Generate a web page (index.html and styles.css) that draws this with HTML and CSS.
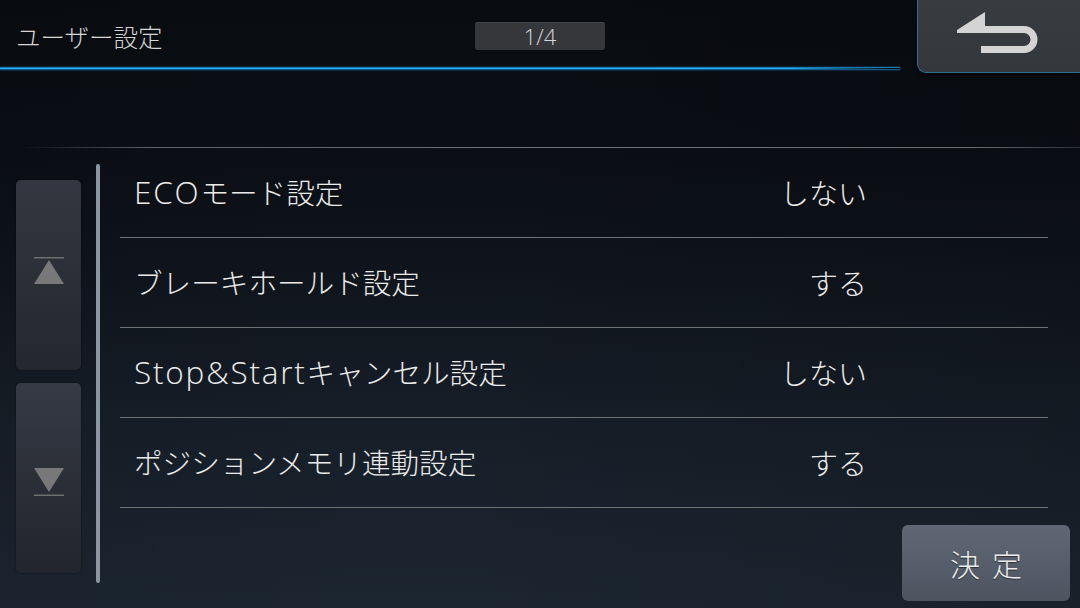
FILE: index.html
```html
<!DOCTYPE html>
<html lang="ja">
<head>
<meta charset="utf-8">
<title>ユーザー設定</title>
<link rel="stylesheet" href="styles.css">
</head>
<body>
<div class="screen">
  <header class="header">
    <div class="header-left">
      <div class="header-row">
        <h1 class="title">ユーザー設定</h1>
        <div class="pager">1/4</div>
      </div>
      <div class="accent"></div>
    </div>
    <button class="back" aria-label="戻る">
      <svg width="100" height="60" viewBox="0 0 100 60">
        <path d="M17 30 L45 12 L45 26 L84 26 A13.5 13.5 0 0 1 84 53 L41 53 L41 46 L84 46 A6.5 6.5 0 0 0 84 33 L17 33 Z" fill="#d4d4d4"/>
      </svg>
    </button>
  </header>

  <div class="divider"></div>

  <main class="main">
    <div class="scroll-col">
      <button class="scroll-btn up" aria-label="上へ">
        <svg width="32" height="28" viewBox="0 0 32 28">
          <rect x="1" y="0" width="30" height="1.5" fill="#6f6f6f"/>
          <polygon points="16,3 31,27 1,27" fill="#787878"/>
        </svg>
      </button>
      <button class="scroll-btn down" aria-label="下へ">
        <svg width="32" height="28" viewBox="0 0 32 28">
          <polygon points="1,0 31,0 16,24" fill="#787878"/>
          <rect x="1" y="26.5" width="30" height="1.5" fill="#6f6f6f"/>
        </svg>
      </button>
    </div>
    <div class="scrollbar"></div>
    <div class="content">
      <ul class="list">
        <li class="row"><span class="label"><span class="latin">ECO</span>モード設定</span><span class="value">しない</span></li>
        <li class="row"><span class="label">ブレーキホールド設定</span><span class="value">する</span></li>
        <li class="row"><span class="label"><span class="latin">Stop&amp;Start</span>キャンセル設定</span><span class="value">しない</span></li>
        <li class="row"><span class="label">ポジションメモリ連動設定</span><span class="value">する</span></li>
      </ul>
      <div class="footer">
        <button class="ok">決定</button>
      </div>
    </div>
  </main>
</div>
</body>
</html>
```

FILE: styles.css
```css
* { box-sizing: border-box; }
html, body { margin: 0; padding: 0; }
body {
  width: 1080px;
  height: 608px;
  overflow: hidden;
  font-family: "Open Sans", "Noto Sans CJK JP", "Noto Sans", sans-serif;
  font-weight: 300;
  color: #e6e6e6;
  background: #0a0d12;
}
.screen {
  width: 1080px;
  height: 608px;
  display: flex;
  flex-direction: column;
  background:
    linear-gradient(90deg, rgba(0,0,0,0.05) 0%, rgba(0,0,0,0) 40%, rgba(0,0,0,0.12) 100%),
    linear-gradient(180deg, #090c10 0%, #0a0d13 22%, #0e131a 40%, #161e28 70%, #1c2631 100%);
}
button { font-family: inherit; font-weight: inherit; border: none; padding: 0; cursor: pointer; }

/* header */
.header {
  display: flex;
  height: 73px;
  flex: none;
}
.header-left {
  flex: 1;
  display: flex;
  flex-direction: column;
}
.header-row {
  height: 67px;
  display: grid;
  grid-template-columns: 475px 130px;
  align-items: start;
}
.title {
  margin: 0;
  padding: 21px 0 0 16px;
  font-size: 24.5px;
  font-weight: 300;
  line-height: 34px;
  color: #d6d6d6;
}
.pager {
  margin-top: 22px;
  height: 28px;
  border-radius: 3px;
  background: #35373b;
  border-top: 1px solid #44464a;
  color: #d6d6d6;
  font-size: 22px;
  line-height: 26px;
  text-align: center;
}
.accent {
  height: 3px;
  width: 900px;
  background: linear-gradient(90deg, #1fb2ec 0%, #1fb2ec 88%, rgba(31,178,236,0) 99%);
  box-shadow: 0 0 2px rgba(31,140,220,0.7);
  border-top: 1px solid #1779b5;
  border-bottom: 1px solid #14588a;
}
.back {
  width: 163px;
  height: 73px;
  flex: none;
  background: linear-gradient(180deg, #383b40 0%, #34373c 100%);
  border-left: 1px solid #2c6f90;
  border-bottom: 1px solid #2c6f90;
  border-radius: 0 0 0 9px;
  display: flex;
  align-items: flex-start;
  justify-content: flex-start;
  padding: 0 0 0 22px;
  box-shadow: 0 2px 4px rgba(0,0,0,0.6);
}
.back svg { display: block; }

.divider {
  margin-top: 74px;
  height: 1px;
  flex: none;
  background: linear-gradient(90deg, rgba(110,110,110,0) 2%, #5e6062 14%, #6e7072 50%, #6a6c6e 90%, rgba(100,100,100,0.4) 100%);
}

/* main */
.main {
  flex: 1;
  display: flex;
  padding-left: 16px;
}
.scroll-col {
  width: 65px;
  display: flex;
  flex-direction: column;
  gap: 13px;
  padding-top: 32px;
}
.scroll-btn {
  height: 190px;
  border-radius: 5px;
  display: flex;
  align-items: center;
  justify-content: center;
  box-shadow: 0 0 2px rgba(0,0,0,0.6);
}
.scroll-btn.up {
  background: linear-gradient(180deg, #343741 0%, #2c2f37 50%, #24272e 100%);
  padding-bottom: 8px;
}
.scroll-btn.down {
  background: linear-gradient(180deg, #363a45 0%, #2c2f38 50%, #22252c 100%);
  padding-top: 8px;
}
.scroll-btn svg { display: block; }
.scrollbar {
  width: 4px;
  height: 419px;
  margin: 16px 0 0 15px;
  border-radius: 2px;
  background: #8c96a2;
}
.content {
  flex: 1;
  margin-left: 20px;
  display: flex;
  flex-direction: column;
}
.list {
  list-style: none;
  margin: 0;
  padding: 0;
  width: 928px;
}
.row {
  height: 90px;
  display: flex;
  align-items: center;
  padding: 0 181px 2px 14px;
  border-bottom: 1px solid #6d7174;
  font-size: 28.6px;
  color: #ebebeb;
}
.label { flex: 1; white-space: nowrap; }
.latin { font-size: 31.5px; letter-spacing: 1.8px; }
.value { white-space: nowrap; font-size: 29px; }
.footer {
  display: flex;
  justify-content: flex-end;
  padding: 17px 10px 0 0;
}
.ok {
  width: 168px;
  height: 76px;
  border-radius: 6px;
  background: linear-gradient(180deg, #5f6775 0%, #555c69 60%, #4d535f 100%);
  color: #ececec;
  font-size: 30px;
  letter-spacing: 12px;
  padding-left: 12px;
  text-shadow: 0 1px 1px rgba(0,0,0,0.5);
}
```
